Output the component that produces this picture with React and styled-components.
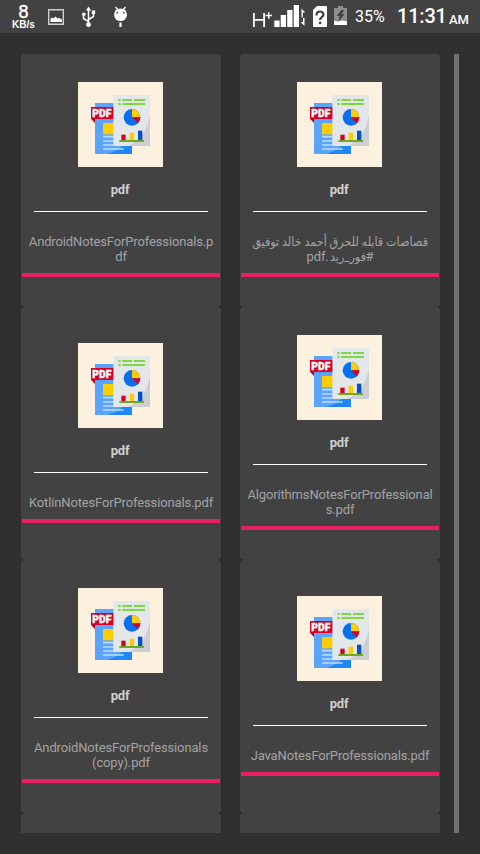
import React from "react";
import styled, { createGlobalStyle } from "styled-components";

const GlobalStyle = createGlobalStyle`
  * { box-sizing: border-box; }
  body { margin: 0; background: #303030; font-family: Roboto, "Noto Sans", "DejaVu Sans", sans-serif; }
`;

const Screen = styled.div`
  display: flex;
  flex-direction: column;
  width: 480px;
  height: 854px;
  overflow: hidden;
  background: #303030;
`;

const StatusBar = styled.header`
  display: flex;
  justify-content: space-between;
  flex: none;
  height: 33px;
  padding: 0 10px 0 11px;
  background: #424242;
  color: #fff;
`;

const StatusGroup = styled.div`
  display: flex;
  align-items: center;
  height: 33px;
`;

const NetSpeed = styled.div`
  display: flex;
  flex-direction: column;
  align-items: center;
  width: 25px;
  height: 33px;
  padding-top: 3px;
`;

const SpeedValue = styled.span`
  height: 17px;
  font: 500 18px/19px "Liberation Sans", sans-serif;
  -webkit-text-stroke: 0.4px #fff;
`;

const SpeedUnit = styled.span`
  height: 10px;
  font: 700 10px/10px "Liberation Sans", sans-serif;
`;

const StatusIcon = styled.svg`
  display: block;
  flex: none;
  margin-left: ${(p) => p.$gap || 0}px;
`;

const Battery = styled.span`
  width: 31px;
  margin-left: 8px;
  font-size: 16px;
  line-height: 33px;
  white-space: nowrap;
`;

const Clock = styled.span`
  width: 49px;
  margin-left: 11px;
  font-size: 20px;
  font-weight: 500;
  line-height: 35px;
  letter-spacing: -0.2px;
  white-space: nowrap;
`;

const Meridiem = styled.span`
  width: 21px;
  margin-left: 3px;
  padding-top: 7px;
  font-size: 13px;
  font-weight: 500;
  line-height: 16px;
`;

const Content = styled.main`
  display: flex;
  height: 779px;
  margin: 21px 21px 0 21px;
  overflow: hidden;
`;

const FileGrid = styled.div`
  display: grid;
  grid-template-columns: 200px 200px;
  grid-auto-rows: 253px;
  column-gap: 19px;
  width: 419px;
`;

const ScrollThumb = styled.div`
  width: 5px;
  height: 779px;
  margin-left: 14px;
  background: #707070;
`;

const Card = styled.article`
  display: flex;
  flex-direction: column;
  align-items: center;
  padding: ${(p) => (p.$short ? 36 : 28)}px 1px 0;
  border-radius: 3px;
  background: #424242;
  box-shadow: 0 0 1px rgba(0, 0, 0, 0.35), 0 1px 1px rgba(0, 0, 0, 0.15);
`;

const Thumbnail = styled.svg`
  display: block;
  flex: none;
  width: 85px;
  height: 85px;
  margin-right: 1px;
`;

const FileType = styled.h2`
  margin: 15px 2px 0 0;
  height: 15px;
  color: #cfcfcf;
  font-size: 13px;
  font-weight: 700;
  line-height: 15px;
  letter-spacing: -0.2px;
`;

const Divider = styled.hr`
  flex: none;
  width: 174px;
  height: 1px;
  margin: 14px 0 22px;
  border: 0;
  background: #fff;
`;

const FileName = styled.p`
  margin: 0;
  color: #a3a3a3;
  font-size: 13px;
  line-height: 15px;
  letter-spacing: -0.14px;
  text-align: center;
  white-space: nowrap;
`;

const NameLine = styled.span`
  display: block;
  height: 15px;
`;

/* Condensed Arabic: the text overflows leftwards and is scaled back into its box. */
const ArabicText = styled.span`
  display: inline-block;
  width: ${(p) => p.$width}px;
  font-size: 12.6px;
  line-height: 15px;
  letter-spacing: 0;
  text-align: right;
  transform: scaleX(0.89);
  transform-origin: right center;
`;

const Accent = styled.div`
  flex: none;
  width: 198px;
  height: 4px;
  margin-top: 9px;
  background: #e91e63;
`;

const files = [
  { id: 1, lines: ["AndroidNotesForProfessionals.p", "df"] },
  {
    id: 2,
    dir: "rtl",
    lines: [
      <ArabicText $width={175}>قصاصات قابله للحرق أحمد خالد توفيق</ArabicText>,
      <>#<ArabicText $width={37}>فور_ريد</ArabicText>.pdf</>,
    ],
  },
  { id: 3, lines: ["KotlinNotesForProfessionals.pdf"] },
  { id: 4, lines: ["AlgorithmsNotesForProfessional", "s.pdf"] },
  { id: 5, lines: ["AndroidNotesForProfessionals", "(copy).pdf"] },
  { id: 6, lines: ["JavaNotesForProfessionals.pdf"] },
];

function PdfThumbnail() {
  return (
    <Thumbnail viewBox="24 21 255 255" aria-label="PDF report">
      <path fill="#fcf0df" d="M24 21h255v255H24z" />
      <path fill="#5ba4fc" d="M75 84h111v153H75z" />
      <path fill="#1f87fa" d="M186 184v53h-75c25-6 55-25 75-53z" />
      <path fill="#fc0" d="M99 144h36v34H99z" />
      <path stroke="#bddcff" strokeWidth="5" d="M99 185h35M99 198h35M99 210h35M99 222h62" />
      <path fill="#e4e7ea" d="M130 60h110v153H130z" />
      <path fill="#cdcfd5" d="M240 120v93h-66c38-15 57-47 66-93z" />
      <path stroke="#81d742" strokeWidth="6" d="M145 75h7M157 75h29M192 75h33M145 87h7M157 87h68" />
      <circle cx="186" cy="127" r="25" fill="#0670ee" />
      <path fill="#fc0" d="M186 127v-25a25 25 0 0 1 25 25z" />
      <path fill="#d80027" d="M186 127h25a25 25 0 0 1-7 18z" />
      <path fill="#d80027" d="M154 179h13v17h-13z" />
      <path fill="#fc0" d="M179 173h13v23h-13z" />
      <path fill="#0653bd" d="M204 167h13v29h-13z" />
      <path stroke="#6baa20" strokeWidth="6" d="M148 198h74" />
      <path fill="#a2001d" d="M63 131h12v13z" />
      <path fill="#d80027" d="M63 96h67v36H63z" />
      <text x="67" y="126" fill="#fff" stroke="#fff" strokeWidth="1" fontFamily="Roboto, sans-serif" fontSize="31" fontWeight="900" textLength="57" lengthAdjust="spacingAndGlyphs">PDF</text>
    </Thumbnail>
  );
}

function FileCard({ file }) {
  return (
    <Card $short={file.lines.length === 1}>
      <PdfThumbnail />
      <FileType>pdf</FileType>
      <Divider />
      <FileName dir={file.dir}>
        {file.lines.map((line, index) => (
          <NameLine key={index}>{line}</NameLine>
        ))}
      </FileName>
      <Accent />
    </Card>
  );
}

export default function App() {
  return (
    <Screen>
      <GlobalStyle />
      <StatusBar>
        <StatusGroup>
          <NetSpeed>
            <SpeedValue>8</SpeedValue>
            <SpeedUnit>KB/s</SpeedUnit>
          </NetSpeed>
          <StatusIcon $gap={12} width="16" height="33" viewBox="48 0 16 33">
            <path fill="none" stroke="#cfcfcf" strokeWidth="1.4" d="M48.7 9.7h14.6v14.6H48.7z" />
            <path fill="#fff" d="M50.500 22v-3l1.500-1.500 1.500 1 2-2 2 2 1.500-.8 3 2V22z" />
          </StatusIcon>
          <StatusIcon $gap={18} width="14" height="33" viewBox="82 0 14 33">
            <path fill="none" stroke="#fff" strokeWidth="1.500" d="M88.500 9v16M88.500 21.500l-5-3V15M88.500 19.500l5-3V13" />
            <path fill="#fff" d="M88.500 6.500l2.500 4h-5zM91.800 10.500h3.400v3.400h-3.400z" />
            <circle cx="83.8" cy="14.3" r="1.8" fill="#fff" />
            <circle cx="88.5" cy="24.7" r="2.4" fill="#fff" />
          </StatusIcon>
          <StatusIcon $gap={17} width="15" height="33" viewBox="113 0 15 33">
            <path stroke="#fff" strokeWidth="1.3" d="M115.500 7l2.500 3M125.500 7l-2.500 3" />
            <path stroke="#fff" strokeWidth="2.2" d="M120.500 22.500v4.500" />
            <ellipse cx="120.5" cy="14.7" rx="6.5" ry="6.3" fill="#fff" />
            <circle cx="117.3" cy="12.7" r=".9" fill="#424242" />
            <circle cx="123.7" cy="12.7" r=".9" fill="#424242" />
          </StatusIcon>
        </StatusGroup>
        <StatusGroup>
          <StatusIcon width="54" height="33" viewBox="253 0 54 33">
            <path fill="none" stroke="#fff" strokeWidth="1.8" d="M253.900 13v14M264.100 13v14M254 19.800h10" />
            <path fill="none" stroke="#fff" strokeWidth="1.500" d="M265.500 15.500h6.500M268.800 12.200v6.600" />
            <path fill="#fff" d="M274.300 20.500h5.300V27h-5.300zM280.700 15h5.300v12h-5.300zM287.200 10h5.300v17h-5.300zM293.700 5h5.300v22h-5.300z" />
            <path fill="#fff" d="M301.500 8.500l3.700 4h-2.400v5h-1.300zM304.500 26l-4-4h2.500v-4h1.500z" />
          </StatusIcon>
          <StatusIcon $gap={6} width="14" height="33" viewBox="313 0 14 33">
            <path fill="#fff" d="M317 6h9q1 0 1 1v19q0 1-1 1h-12q-1 0-1-1V10z" />
            <path fill="none" stroke="#424242" strokeWidth="2.2" d="M316.500 15.500v-1q.4-3 3.500-3t3.500 3c0 2.600-3.500 2.600-3.500 5.500" />
            <path fill="#424242" d="M318.900 21.700h2.400v2.400h-2.400z" />
          </StatusIcon>
          <StatusIcon $gap={7} width="13" height="33" viewBox="334 0 13 33">
            <path fill="#8e8e8e" d="M338 6h5v2h4v14h-13V8h4z" />
            <path fill="#fff" d="M334 20.500l3 1 5-1 5 1V25h-13z" />
            <path fill="#424242" d="M341.500 10l-5 6h3l-1 6 6-8h-3l3-4z" />
          </StatusIcon>
          <Battery>35%</Battery>
          <Clock>11:31</Clock>
          <Meridiem>AM</Meridiem>
        </StatusGroup>
      </StatusBar>
      <Content>
        <FileGrid>
          {files.map((file) => (
            <FileCard key={file.id} file={file} />
          ))}
          <Card />
          <Card />
        </FileGrid>
        <ScrollThumb />
      </Content>
    </Screen>
  );
}
